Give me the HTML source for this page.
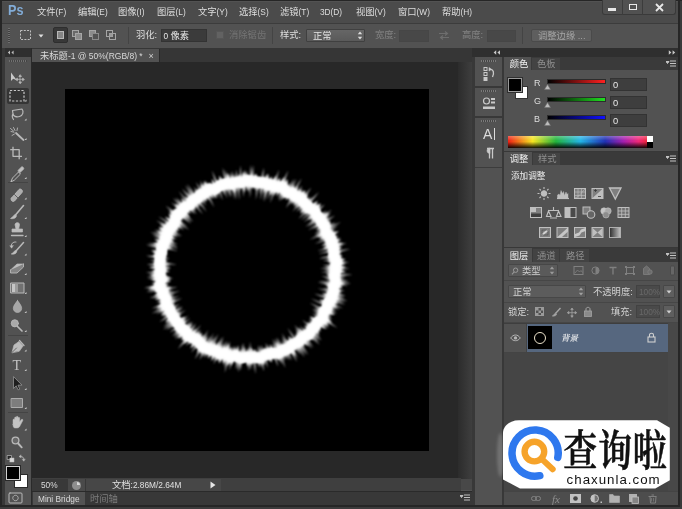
<!DOCTYPE html>
<html lang="zh-CN">
<head>
<meta charset="utf-8">
<title>Photoshop</title>
<style>
html,body{margin:0;padding:0}
body{width:682px;height:509px;position:relative;overflow:hidden;background:#262626;
 font-family:"Liberation Sans","Noto Sans CJK SC",sans-serif;font-size:9.3px;color:#dedede;line-height:1}
.a{position:absolute}
.t{position:absolute;white-space:nowrap;line-height:12px;height:12px;filter:blur(0.3px)}
.dim{color:#7e7e7e}
.l{font-size:8.3px}
.inp{position:absolute;background:#3b3b3b;border:1px solid #333;box-sizing:border-box}
</style>
</head>
<body>
<svg width="0" height="0" style="position:absolute"><defs><filter id="soft" x="-5%" y="-5%" width="110%" height="110%"><feGaussianBlur stdDeviation="0.35"/></filter></defs></svg>
<!-- window background -->
<div class="a" style="left:1.5px;top:1px;width:676.5px;height:504px;background:#525252"></div>

<div class="a" style="left:679.8px;top:1px;width:2.2px;height:508px;background:#3a3a3a"></div>
<div class="a" style="left:0;top:506.5px;width:682px;height:2.5px;background:#3c3c3c"></div>
<!-- menu bar -->
<div class="a" id="menubar" style="left:1.5px;top:1.5px;width:676.5px;height:21.5px;background:#4b4b4b"></div>
<div class="t" style="left:8.4px;top:2.3px;font-size:15.5px;font-weight:bold;color:#82acd7;line-height:16px;height:16px;transform:scaleX(0.815);transform-origin:0 0">Ps</div>
<div class="t" style="left:37px;top:6px">文件<span class="l">(F)</span></div>
<div class="t" style="left:78px;top:6px">编辑<span class="l">(E)</span></div>
<div class="t" style="left:118px;top:6px">图像<span class="l">(I)</span></div>
<div class="t" style="left:157px;top:6px">图层<span class="l">(L)</span></div>
<div class="t" style="left:198px;top:6px">文字<span class="l">(Y)</span></div>
<div class="t" style="left:239px;top:6px">选择<span class="l">(S)</span></div>
<div class="t" style="left:280px;top:6px">滤镜<span class="l">(T)</span></div>
<div class="t" style="left:320px;top:6px"><span class="l">3D</span><span class="l">(D)</span></div>
<div class="t" style="left:356px;top:6px">视图<span class="l">(V)</span></div>
<div class="t" style="left:398px;top:6px">窗口<span class="l">(W)</span></div>
<div class="t" style="left:442px;top:6px">帮助<span class="l">(H)</span></div>
<!-- window controls -->
<div class="a" style="left:602px;top:0;width:74px;height:15px;background:#515151;border:1px solid #3a3a3a;border-top:none;box-sizing:border-box;border-radius:0 0 3px 3px"></div>
<div class="a" style="left:622px;top:0;width:1px;height:15px;background:#3c3c3c"></div>
<div class="a" style="left:642px;top:0;width:1px;height:15px;background:#3c3c3c"></div>
<div class="a" style="left:608px;top:8px;width:8px;height:3px;background:#e8e8e8"></div>
<div class="a" style="left:629px;top:4px;width:8px;height:6px;border:1.5px solid #e8e8e8;box-sizing:border-box"></div>
<svg class="a" style="left:655px;top:3px" width="9" height="9" viewBox="0 0 9 9"><path d="M1 1L8 8M8 1L1 8" stroke="#e8e8e8" stroke-width="1.8" fill="none"/></svg>

<!-- options bar -->
<div class="a" style="left:2px;top:22.5px;width:676px;height:1.5px;background:#3c3c3c"></div>
<div class="a" style="left:2px;top:24px;width:676px;height:24px;background:#525252"></div>
<!--OPTIONS-->
<!-- options bar content -->
<div class="a" style="left:8px;top:28px;width:2px;height:15px;background:repeating-linear-gradient(to bottom,#6e6e6e 0 1px,#3f3f3f 1px 2px)"></div>
<svg class="a" style="left:19px;top:29px" width="30" height="12" viewBox="0 0 30 12"><rect x="1.5" y="1.5" width="10" height="9" fill="none" stroke="#c0c0c0" stroke-width="1" stroke-dasharray="2 1.3"/><path d="M19.5 5.5h5l-2.5 3z" fill="#e0e0e0"/></svg>
<div class="a" style="left:52.500px;top:27px;width:15.500px;height:15.500px;background:#383838;border:1px solid #2e2e2e;box-sizing:border-box;border-radius:2px"></div>
<div class="a" style="left:56.500px;top:31px;width:7.500px;height:7.500px;background:#858585;border:1px solid #b8b8b8;box-sizing:border-box"></div>
<svg class="a" style="left:71px;top:29px" width="48" height="12" viewBox="0 0 48 12">
 <g fill="#6a6a6a" stroke="#a6a6a6" stroke-width="1" filter="url(#soft)"><rect x="1.5" y="1.5" width="6" height="6"/><rect x="4.5" y="4.5" width="6" height="6" fill="#8c8c8c"/>
 <rect x="18.5" y="1.5" width="6" height="6" fill="#8c8c8c"/><rect x="21.5" y="4.5" width="6" height="6" fill="#525252" stroke="#8a8a8a"/>
 <rect x="35.5" y="1.5" width="6" height="6" fill="#525252"/><rect x="38.5" y="4.5" width="6" height="6" fill="none"/><rect x="38.5" y="4.5" width="3" height="3" fill="#9a9a9a" stroke="none"/></g></svg>
<div class="a" style="left:127.5px;top:27px;width:1px;height:17px;background:#444"></div>
<div class="t" style="left:136px;top:29px">羽化:</div>
<div class="inp" style="left:160.5px;top:29px;width:46px;height:13px"></div>
<div class="t" style="left:163.5px;top:29.5px;color:#e6e6e6"><span class="l">0 </span>像素</div>
<div class="a" style="left:215.5px;top:31px;width:8px;height:8px;background:#626262;border:1px solid #565656;box-sizing:border-box"></div>
<div class="t dim" style="left:229px;top:29px;color:#747474">消除锯齿</div>
<div class="a" style="left:272px;top:27px;width:1px;height:17px;background:#444"></div>
<div class="t" style="left:280px;top:29px">样式:</div>
<div class="a" style="left:306px;top:28.5px;width:58.5px;height:13.5px;background:linear-gradient(#666,#5a5a5a);border:1px solid #404040;box-sizing:border-box;border-radius:1px"></div>
<div class="t" style="left:313px;top:29.5px;color:#e6e6e6">正常</div>
<svg class="a" style="left:356.5px;top:31px" width="6" height="9" viewBox="0 0 6 9"><path d="M3 0.5L5.2 3.3H0.8zM3 8.5L5.2 5.7H0.8z" fill="#dcdcdc"/></svg>
<div class="t dim" style="left:375px;top:29px;color:#848484">宽度:</div>
<div class="a" style="left:399px;top:29.5px;width:29.5px;height:12.5px;background:#484848;border:1px solid #464646;box-sizing:border-box"></div>
<svg class="a" style="left:438px;top:30px" width="12" height="11" viewBox="0 0 12 11"><path d="M1 3.5h8M7 1.5l2.5 2L7 5.5M11 7.5H3M5 5.5L2.5 7.5L5 9.5" stroke="#6e6e6e" stroke-width="1.1" fill="none"/></svg>
<div class="t dim" style="left:462px;top:29px;color:#848484">高度:</div>
<div class="a" style="left:486.5px;top:29.5px;width:29px;height:12.5px;background:#484848;border:1px solid #464646;box-sizing:border-box"></div>
<div class="a" style="left:522px;top:27px;width:1px;height:17px;background:#444"></div>
<div class="a" style="left:530.5px;top:29px;width:61.5px;height:13px;background:#5e5e5e;border:1px solid #4a4a4a;box-sizing:border-box;border-radius:2px"></div>
<div class="t" style="left:538px;top:29.5px;color:#a4a4a4">调整边缘 ...</div>


<!-- tab bar row -->
<div class="a" style="left:2px;top:48px;width:676px;height:14px;background:#363636"></div>

<!-- canvas surround -->
<div class="a" style="left:32px;top:62px;width:440px;height:417px;background:#282828"></div>
<!-- canvas -->
<div class="a" style="left:64.5px;top:88.8px;width:364.5px;height:362.7px;background:#000"></div>
<svg style="position:absolute;left:0;top:0" width="682" height="509" viewBox="0 0 682 509"><defs><filter id="rb" x="-10%" y="-10%" width="120%" height="120%"><feGaussianBlur stdDeviation="1.0"/></filter><filter id="rc" x="-10%" y="-10%" width="120%" height="120%"><feGaussianBlur stdDeviation="1.2"/></filter></defs><path d="M339.7 269.6 343.8 270.6 340.1 271.5 340.4 272.5 339.4 273.4 352.7 275.1 339.4 275.4 346.4 276.8 339.1 277.3 344.9 278.8 339.7 279.3 349.2 281.3 340.0 281.3 351.2 283.8 340.2 283.3 348.1 285.5 339.0 285.0 343.1 286.8 338.4 286.9 339.0 288.0 338.1 288.8 344.9 291.3 337.9 290.8 341.4 292.6 338.1 292.8 345.7 295.9 337.9 294.8 344.8 297.8 337.1 296.6 347.6 300.9 336.2 298.4 345.7 302.6 335.3 300.1 345.4 304.8 334.2 301.8 338.0 304.3 333.2 303.4 343.1 308.5 332.2 305.1 339.6 309.4 331.6 307.0 336.1 310.1 330.8 308.7 337.0 312.8 330.3 310.6 336.3 314.8 329.1 312.1 331.5 314.5 328.4 314.0 331.8 317.0 327.3 315.6 332.4 319.7 327.4 317.9 330.8 321.2 326.7 319.7 337.6 328.0 326.1 321.7 328.8 324.7 323.8 322.5 329.2 327.5 322.4 323.9 327.9 329.2 321.0 325.2 320.8 326.3 320.0 326.9 321.3 329.2 319.0 328.6 321.1 331.7 317.5 329.9 319.1 332.5 316.4 331.4 320.2 336.3 314.8 332.6 321.8 340.6 313.8 334.4 319.5 341.4 312.9 336.2 319.7 344.7 311.8 337.9 312.9 340.5 309.9 338.7 310.1 340.4 307.8 339.2 313.5 347.4 306.0 340.0 311.9 348.8 305.0 341.9 305.0 343.4 303.7 343.4 304.9 346.6 302.1 344.5 308.4 355.0 300.3 345.3 306.2 355.6 298.9 346.7 304.7 357.4 297.3 347.7 300.3 354.5 295.2 348.0 295.5 350.5 293.7 349.2 297.9 358.6 292.4 350.8 297.2 361.9 290.9 352.3 290.2 353.1 289.0 352.8 291.7 360.5 287.3 353.7 289.3 360.4 285.3 354.0 286.5 359.2 283.5 354.8 285.0 361.0 281.8 355.8 285.5 368.0 280.4 357.5 281.8 364.3 278.2 357.2 278.1 360.1 276.3 357.5 278.1 366.7 274.1 357.1 273.6 358.8 272.5 358.3 271.7 359.0 270.5 358.2 270.4 362.1 268.7 358.9 268.1 360.8 266.7 358.8 267.5 367.9 264.8 359.4 264.7 364.1 263.2 361.2 263.8 371.5 261.3 362.0 261.1 367.7 259.4 362.4 259.0 367.3 257.4 362.2 256.5 362.8 255.4 361.7 255.4 374.0 253.5 362.1 252.7 364.3 251.6 361.6 250.9 369.9 249.6 362.3 248.8 370.9 247.7 361.4 246.7 362.2 245.8 361.9 244.8 362.7 243.8 362.4 242.8 362.9 241.9 362.3 240.3 370.7 239.8 363.2 238.0 372.3 238.0 362.1 236.1 369.8 236.2 360.9 235.2 361.0 234.3 360.3 233.0 362.6 232.3 360.4 229.6 370.1 230.2 361.1 228.5 364.6 228.4 360.5 224.6 373.0 226.5 359.8 223.8 366.9 224.9 358.5 222.7 363.0 222.9 358.3 221.8 358.9 220.9 358.5 218.6 362.6 219.1 357.7 217.5 359.5 217.3 357.0 213.6 364.3 215.7 355.7 213.2 359.4 213.9 355.0 212.2 356.5 212.0 354.4 210.4 355.8 210.1 354.0 208.5 355.1 208.2 353.6 205.1 357.8 206.2 353.2 203.1 357.1 204.4 352.5 199.4 359.7 202.7 351.5 200.7 353.0 200.8 350.8 194.6 359.4 199.6 349.0 197.8 350.0 197.9 348.0 196.2 348.9 197.0 346.0 191.2 352.7 195.7 344.4 193.1 346.5 193.9 343.7 192.9 343.4 192.4 342.4 190.4 343.5 190.4 341.9 186.0 345.8 188.9 340.6 187.1 341.3 186.6 340.4 177.8 348.9 185.1 339.1 182.7 340.3 184.0 337.4 181.9 338.3 182.8 335.9 178.4 338.9 181.9 334.0 174.9 339.4 180.3 332.9 173.9 337.5 178.9 331.6 172.2 336.2 177.0 330.7 174.3 331.7 176.2 328.7 169.9 332.6 175.4 326.9 174.1 326.7 173.9 325.6 166.2 330.1 173.0 323.9 163.1 329.7 171.7 322.4 163.3 326.9 170.8 320.7 165.1 323.2 169.7 319.1 168.0 319.0 168.7 317.4 159.5 321.7 167.7 315.8 163.3 317.2 166.5 314.3 160.6 316.3 166.3 312.1 160.7 313.9 165.6 310.4 155.9 314.0 163.6 309.2 151.7 313.6 162.4 307.6 155.3 309.6 161.6 305.8 151.6 308.8 161.8 303.6 161.5 302.7 161.8 301.5 156.3 302.5 161.6 299.6 160.2 299.1 160.0 298.1 153.5 299.1 158.7 296.5 149.4 298.2 159.1 294.3 156.5 294.0 158.4 292.5 155.0 292.4 157.3 290.8 146.1 292.3 155.6 289.2 146.5 290.0 154.7 287.4 144.0 288.3 154.8 285.3 154.4 284.4 156.5 283.1 155.1 282.3 156.7 281.1 152.6 280.6 157.0 279.1 147.1 279.1 156.2 277.3 146.8 277.0 155.4 275.4 148.5 274.8 155.9 273.4 145.9 272.8 155.9 271.5 154.0 270.6 156.0 269.6 155.2 268.6 155.9 267.7 154.6 266.7 155.3 265.7 146.7 264.3 155.3 263.8 154.7 262.8 155.7 261.9 150.4 260.4 155.4 259.9 154.4 258.8 155.4 257.9 146.0 255.7 155.5 256.0 153.8 254.7 156.2 254.1 153.4 252.6 156.9 252.3 150.6 250.0 157.7 250.5 155.7 249.0 157.7 248.5 145.9 244.6 157.0 246.3 148.0 242.9 157.8 244.5 155.9 242.9 158.9 242.8 157.1 241.2 160.6 241.3 157.4 239.2 160.4 239.2 152.5 235.3 160.9 237.3 150.1 232.1 161.8 235.6 153.1 231.0 162.7 233.9 154.8 229.4 162.8 231.8 158.5 228.8 163.3 229.9 159.3 226.9 164.1 228.1 162.8 226.3 165.3 226.5 156.2 220.6 166.6 225.0 164.8 222.9 168.8 224.0 158.1 216.6 169.4 222.2 169.2 220.9 170.6 220.6 169.5 218.8 171.0 218.7 169.7 216.6 172.0 217.0 168.6 213.4 172.4 214.9 168.1 210.5 173.5 213.3 165.5 205.8 174.8 211.8 173.7 209.7 176.3 210.5 175.3 208.4 177.6 209.1 171.3 202.3 179.1 207.8 176.0 203.7 179.7 205.7 173.0 198.0 181.0 204.3 175.6 197.5 182.9 203.5 183.3 202.5 184.8 202.6 180.8 196.9 187.0 202.1 178.5 191.2 187.9 200.4 187.0 197.7 188.4 197.9 182.1 188.6 189.8 196.5 187.0 191.4 191.3 195.4 185.1 185.3 193.5 195.0 186.7 183.8 195.4 194.4 195.0 192.1 196.5 192.5 194.1 187.1 198.2 191.5 197.3 188.3 199.7 190.3 195.9 181.9 201.7 189.9 200.3 185.4 203.4 188.9 200.0 180.6 204.4 186.8 203.7 183.2 206.2 186.0 204.5 180.2 208.0 185.2 207.8 182.5 209.9 184.7 210.0 182.5 212.1 184.8 212.7 183.7 214.0 184.5 214.6 183.4 215.6 183.2 212.0 170.5 217.1 181.8 217.6 180.2 219.1 181.5 219.7 180.4 221.0 181.1 221.1 178.1 222.7 180.0 223.4 178.9 224.5 179.2 222.6 167.5 226.5 179.3 225.5 170.1 228.5 179.4 228.3 173.5 230.6 179.9 230.2 172.1 232.4 178.9 232.1 171.1 234.2 178.2 234.6 173.8 236.1 178.2 236.1 169.7 238.0 177.7 238.7 174.4 240.0 177.7 240.0 165.3 241.9 178.0 242.7 173.3 243.8 176.8 244.6 169.6 245.7 176.1 246.7 170.7 247.7 175.6 248.7 174.9 249.7 176.3 251.0 164.8 251.6 176.6 253.2 165.0 253.5 177.4 254.7 174.4 255.5 177.2 256.7 174.7 257.3 178.1 258.6 175.7 259.2 178.5 260.5 176.4 261.2 178.2 263.8 167.8 263.2 178.1 264.6 175.9 265.0 179.2 267.0 173.9 266.9 179.3 268.3 177.5 268.6 180.4 270.0 178.7 270.6 180.4 271.9 179.4 272.5 180.6 273.9 179.3 274.5 180.9 279.1 169.4 276.2 182.0 278.4 178.5 278.0 182.7 279.5 181.3 280.0 182.7 281.4 181.7 282.3 182.1 288.2 170.5 284.1 183.1 287.0 178.8 285.6 184.6 287.7 182.2 287.0 186.0 289.7 182.7 288.3 187.8 294.0 178.7 290.2 188.3 296.4 178.8 292.5 188.0 294.1 187.3 294.1 189.3 301.7 178.3 295.9 190.0 296.6 190.7 297.2 191.6 302.2 185.6 298.8 192.7 303.0 188.2 300.5 193.7 303.5 191.1 302.5 194.2 305.5 191.8 304.3 195.0 311.4 187.5 305.0 197.2 307.4 195.9 306.4 198.7 309.3 196.7 307.7 200.1 311.8 196.9 309.3 201.1 319.0 192.1 310.5 202.7 311.7 202.8 312.0 203.9 313.0 204.3 313.2 205.5 316.8 203.3 315.2 206.2 319.5 203.6 317.3 207.0 320.1 205.8 318.4 208.6 324.8 204.4 319.4 210.3 321.3 210.0 320.2 212.1 321.4 212.4 321.2 213.8 326.9 210.8 322.9 215.0 332.0 209.7 324.4 216.3 331.2 212.9 325.2 218.1 329.5 216.5 325.5 220.2 335.0 215.5 326.5 221.9 330.5 220.6 328.5 223.0 331.0 222.6 329.2 224.8 335.8 222.4 329.4 226.9 341.1 222.0 329.1 229.2 338.0 226.0 329.6 231.1 335.3 229.5 331.7 232.2 335.2 231.7 333.1 233.7 335.5 233.8 333.9 235.5 335.2 236.0 335.0 237.1 336.0 237.8 335.4 239.1 341.3 238.1 336.3 240.8 341.8 240.1 336.4 242.8 338.1 243.3 337.3 244.6 346.6 243.1 338.0 246.4 339.7 247.0 337.9 248.4 339.9 249.0 337.9 250.4 350.3 248.9 338.6 252.3 340.1 253.0 337.7 254.4 342.1 254.6 338.8 256.1 343.0 256.6 339.0 258.1 342.3 258.6 340.2 259.9 342.7 260.6 340.9 261.8 349.2 262.1 340.9 263.7 342.1 264.7 340.1 265.7 346.8 266.5 339.8 267.7 349.7 268.5Z M330.9 269.6 324.1 270.4 331.5 271.4 320.2 271.9 330.9 273.1 325.3 273.7 330.1 274.8 328.5 275.5 329.7 276.5 321.3 276.6 331.0 278.4 324.3 278.5 331.7 280.2 326.3 280.4 330.7 281.9 318.8 280.9 329.9 283.5 317.5 282.2 329.6 285.2 327.0 285.6 328.9 286.9 326.1 287.1 329.3 288.7 322.8 288.1 328.9 290.5 317.4 288.3 328.4 292.1 327.0 292.7 327.7 293.7 321.7 292.8 327.8 295.6 321.1 294.3 327.4 297.3 314.1 293.5 325.9 298.7 324.3 299.0 324.7 300.1 323.7 300.6 324.2 301.8 320.3 301.0 322.6 303.0 310.7 298.4 323.2 305.1 322.2 305.6 322.6 306.8 320.7 306.8 321.2 308.0 309.6 302.8 320.3 309.5 314.8 307.4 319.3 311.0 313.1 308.3 319.3 313.0 312.0 309.4 319.5 315.1 314.2 312.8 318.9 316.9 312.3 313.5 316.8 317.6 315.3 317.6 315.0 318.5 311.4 316.9 313.5 319.5 312.6 320.0 312.5 321.0 308.7 319.0 312.2 322.9 309.1 321.5 310.7 324.0 307.3 322.1 309.8 325.5 302.3 319.8 308.6 326.8 306.4 325.9 307.7 328.3 306.5 328.4 306.9 330.0 303.0 327.2 305.6 331.3 299.4 325.8 303.7 331.8 302.0 331.2 302.1 332.6 294.2 324.7 300.6 333.5 295.1 328.1 299.3 334.8 297.0 333.1 298.2 336.2 294.9 333.2 296.9 337.3 295.3 336.6 295.2 338.0 287.3 327.8 293.7 338.8 292.0 337.8 292.1 339.6 288.5 335.4 290.7 340.6 289.5 340.2 289.2 341.5 288.1 341.3 287.7 342.4 281.7 333.0 286.6 343.9 281.8 336.5 285.2 345.2 281.8 340.2 283.3 345.2 281.2 342.7 281.6 345.6 277.0 337.3 280.2 346.9 275.5 337.6 278.5 347.5 274.3 338.9 277.3 349.2 272.5 338.6 275.5 349.3 272.6 343.6 273.5 349.0 272.4 348.4 271.7 349.3 270.5 348.2 269.8 348.8 267.7 344.2 268.3 349.9 265.6 342.6 266.6 350.2 265.0 347.1 264.9 350.3 263.3 346.9 263.3 351.3 261.2 344.7 261.7 352.2 259.7 345.6 260.1 353.3 258.0 345.1 258.3 353.4 257.1 351.2 256.5 353.1 255.2 348.6 254.7 352.4 253.5 348.9 252.9 352.4 251.8 347.9 251.2 352.7 250.0 341.6 249.4 352.9 248.5 346.6 247.7 352.7 246.8 351.3 246.0 353.1 245.1 351.8 244.2 353.4 243.9 342.7 242.4 353.3 242.3 343.2 240.6 353.7 239.8 352.8 238.9 352.9 238.3 351.2 237.4 351.3 236.9 348.2 235.7 351.0 235.0 349.8 233.8 351.7 233.6 348.2 231.9 352.5 231.9 348.1 230.2 352.1 230.3 347.4 228.6 351.2 230.1 341.1 227.2 349.6 228.3 342.0 225.4 349.6 227.1 340.5 223.6 349.4 225.2 341.2 221.7 349.7 223.0 342.9 220.1 348.9 223.7 336.2 218.8 347.3 221.9 336.8 217.1 346.8 216.6 345.8 215.5 346.3 216.1 342.7 213.8 345.7 218.4 333.6 212.0 345.4 215.8 335.6 210.4 344.8 213.5 336.7 208.7 344.3 213.9 332.7 206.9 343.9 210.4 335.7 205.6 342.4 205.9 340.3 204.0 341.8 208.0 333.7 203.2 339.8 208.5 330.0 201.8 338.7 201.7 337.2 200.8 337.1 202.0 333.9 199.3 336.2 200.5 333.1 197.8 335.3 201.1 329.6 196.2 334.6 196.2 333.3 194.6 333.7 201.1 324.8 192.5 333.5 194.5 330.0 191.5 332.0 196.2 325.6 190.5 330.5 196.3 323.2 189.5 329.0 189.7 327.6 188.2 327.8 193.4 321.6 186.6 326.9 191.5 321.3 185.6 325.5 185.6 324.4 183.8 324.7 190.3 318.1 183.3 322.9 186.6 319.1 182.1 321.6 188.7 315.4 181.3 320.0 183.6 317.2 180.0 318.8 180.1 317.6 178.9 317.4 181.6 314.6 178.1 315.8 185.7 309.9 177.5 314.2 178.8 312.3 175.8 313.2 183.2 307.8 174.9 311.6 182.8 306.2 174.9 309.6 175.7 308.2 173.9 308.2 179.6 304.3 173.2 306.6 173.3 305.6 172.4 305.0 174.8 303.0 170.8 303.9 182.3 297.9 169.9 302.3 174.9 299.3 170.5 300.2 179.3 295.9 170.4 298.4 174.8 295.8 169.8 296.7 174.4 294.3 168.6 295.3 180.3 290.7 167.4 293.8 174.4 290.9 167.2 292.1 168.1 290.9 167.6 290.2 177.7 286.8 165.9 288.8 172.3 286.5 165.1 287.2 167.6 285.8 164.2 285.5 168.2 283.9 163.9 283.8 165.0 282.7 164.7 281.9 170.8 280.1 165.9 279.9 173.5 278.2 165.7 278.2 169.4 277.0 165.3 276.5 168.2 275.4 164.3 274.8 166.3 273.9 164.1 273.1 166.0 272.2 164.5 271.3 166.5 270.5 164.6 269.6 165.9 268.7 164.6 267.9 164.9 267.0 164.1 266.1 164.8 265.3 164.1 264.3 177.1 264.4 164.0 262.6 166.0 261.9 164.3 260.8 165.2 260.1 164.3 259.1 169.5 258.9 164.6 257.3 167.6 256.9 165.5 255.7 166.6 255.0 166.4 254.1 166.6 253.2 165.7 252.2 166.7 251.5 166.2 250.5 167.8 250.0 166.1 248.7 178.1 250.9 166.4 246.9 174.1 248.2 167.5 245.4 178.8 248.0 168.7 243.9 176.7 245.7 169.0 242.2 177.9 244.5 169.7 240.6 173.3 241.0 169.9 238.8 175.2 240.0 170.4 237.1 177.4 239.2 171.2 235.5 172.8 235.3 171.2 233.6 180.3 237.0 171.9 232.0 182.3 236.3 173.7 230.9 178.3 232.4 175.0 229.6 178.8 230.8 176.1 228.3 177.6 228.2 176.9 226.7 184.0 230.1 177.6 225.1 184.6 228.6 178.2 223.4 189.6 230.1 179.2 222.0 187.4 226.7 180.0 220.4 181.4 220.4 180.1 218.3 181.7 218.4 181.8 217.4 191.2 223.8 182.9 216.0 191.7 222.3 184.6 215.1 193.5 221.8 185.7 213.8 186.9 213.7 186.5 212.2 188.3 212.7 187.5 210.6 188.8 210.7 189.1 209.8 194.4 214.0 191.1 209.3 196.7 214.2 192.7 208.5 195.6 210.5 193.5 206.8 195.1 207.4 194.6 205.4 203.2 214.6 195.7 204.0 198.8 206.6 197.3 203.2 201.1 206.9 198.9 202.4 206.7 212.0 200.7 202.0 201.6 201.8 201.5 200.0 206.2 205.7 202.9 199.0 205.8 202.1 204.4 198.0 206.5 199.9 205.9 197.1 207.2 197.7 207.7 196.8 214.4 207.4 209.0 195.6 210.1 195.9 210.1 193.9 213.5 198.9 211.9 193.6 214.8 197.7 213.8 193.6 215.6 195.5 215.5 192.9 218.7 198.6 217.2 192.6 218.8 194.2 218.8 191.8 222.8 200.5 220.1 190.3 221.2 190.8 221.8 189.8 224.5 195.5 223.4 189.2 227.1 198.6 225.0 188.4 227.1 192.6 226.8 188.2 230.0 197.7 228.4 187.5 231.6 197.6 230.5 188.5 231.8 191.0 232.1 188.0 235.1 199.8 233.9 188.1 236.7 199.8 235.6 187.5 237.2 192.6 237.2 186.5 239.6 200.0 239.0 186.7 240.3 191.7 240.8 186.9 241.7 188.4 242.5 186.8 243.9 197.4 244.2 186.5 245.1 186.2 245.9 185.3 246.8 187.6 247.7 185.3 248.5 192.8 249.5 185.2 249.9 198.2 251.2 185.4 252.0 187.7 252.9 186.6 253.6 189.0 254.6 187.0 255.2 190.7 256.4 186.5 255.8 200.0 258.2 186.8 258.9 188.0 259.8 187.4 259.6 194.5 261.7 186.8 260.2 200.0 263.4 187.4 263.7 190.3 265.1 187.7 263.1 200.9 266.6 189.2 264.3 202.0 268.3 189.4 269.0 190.1 270.1 189.2 268.0 199.7 271.9 189.5 270.8 195.8 273.5 190.1 270.0 203.3 275.2 190.6 275.6 192.2 276.8 191.4 277.3 192.6 278.7 191.3 278.9 193.1 280.5 191.7 278.0 199.6 282.2 192.2 278.7 201.8 283.0 194.5 281.0 200.6 284.3 195.9 284.3 197.8 285.8 196.7 286.2 197.8 287.8 196.6 287.7 198.7 289.9 196.4 288.3 201.0 291.2 197.7 285.7 208.3 292.0 199.9 289.8 204.8 293.9 200.0 292.0 204.4 295.5 200.9 293.2 205.5 297.4 201.2 293.9 207.4 298.3 202.9 292.6 211.7 299.3 204.5 299.3 205.8 300.5 205.8 296.4 212.0 301.6 207.1 299.3 211.1 303.0 208.1 299.9 212.8 304.3 209.3 301.9 213.1 305.3 210.8 298.4 218.9 306.5 212.0 306.2 213.5 308.3 212.7 301.3 220.3 310.5 213.0 307.0 217.3 311.8 214.3 303.5 222.5 312.7 215.8 309.8 219.3 313.4 217.5 311.1 220.4 314.6 218.8 305.2 226.9 315.3 220.4 307.5 227.1 316.7 221.6 316.1 223.1 317.5 223.3 308.0 230.5 318.3 224.8 312.7 229.3 319.5 226.1 319.3 227.2 320.7 227.5 317.5 230.3 321.3 229.1 314.6 233.7 321.8 230.9 314.1 235.8 321.4 233.0 309.5 239.7 322.3 234.5 318.4 237.2 322.8 236.1 319.9 238.3 324.4 237.4 321.7 239.4 325.8 238.7 314.8 243.8 326.5 240.3 324.7 241.9 326.5 242.1 324.5 243.8 327.2 243.8 325.8 245.1 327.5 245.5 322.6 247.8 328.7 247.0 317.3 251.0 328.7 248.8 328.4 249.8 329.4 250.4 318.4 253.8 329.0 252.3 328.2 253.4 329.4 254.0 327.6 255.2 329.3 255.8 318.6 258.4 330.0 257.4 326.0 258.9 330.7 259.1 322.7 260.9 331.8 260.8 327.1 262.1 332.1 262.5 329.9 263.6 331.6 264.3 322.3 265.7 331.1 266.1 323.7 267.2 331.3 267.8 319.9 268.8Z" fill="#fff" fill-rule="evenodd" filter="url(#rb)" opacity="0.85"/><path d="M339.9 269.6 346.1 271.7 339.6 273.5 340.7 275.4 339.1 277.3 340.6 279.4 339.8 281.2 344.6 283.9 339.5 285.1 342.4 287.7 337.4 288.7 341.5 291.6 337.7 292.7 338.2 294.9 336.7 296.5 339.5 299.4 335.5 300.2 337.7 303.1 333.8 303.7 337.2 307.2 331.1 306.7 333.0 309.8 330.8 310.8 334.4 314.9 328.5 314.0 327.7 315.8 327.4 317.9 332.3 323.3 325.7 321.4 328.5 325.7 321.9 323.5 325.8 328.9 319.6 326.6 319.8 329.3 317.9 330.2 319.0 333.8 314.7 332.5 315.0 335.5 312.8 336.1 312.8 338.9 310.0 338.8 309.3 341.0 306.0 340.1 308.3 346.1 303.3 342.9 303.2 346.0 300.8 345.9 300.2 348.6 296.9 347.1 296.3 349.9 293.6 349.0 295.2 356.0 290.8 352.0 289.9 354.6 287.5 354.1 286.2 356.0 283.7 355.2 282.6 357.7 280.4 357.5 279.3 360.5 276.1 357.1 274.8 359.4 272.3 357.6 271.5 362.4 268.6 358.5 266.9 360.1 264.9 359.9 263.8 365.1 261.4 362.5 259.5 363.1 257.4 362.2 255.6 363.3 253.5 361.8 251.7 364.6 249.6 362.5 247.7 366.4 245.8 361.3 243.8 362.6 241.8 362.9 239.8 363.3 238.0 361.8 235.9 363.0 234.4 359.8 231.5 365.5 230.2 361.5 227.2 366.0 226.6 359.4 223.4 364.0 223.1 357.8 219.3 363.5 218.9 358.1 215.9 361.0 215.7 355.5 211.5 360.9 211.9 354.6 208.1 358.6 208.2 353.6 205.9 353.8 204.7 351.8 201.0 354.5 200.8 350.8 197.3 352.9 198.3 347.5 195.6 348.1 195.6 344.5 190.5 348.4 192.4 342.4 189.2 343.5 189.0 340.6 183.4 344.1 185.0 339.2 181.4 340.2 183.4 335.3 178.0 337.9 180.2 333.0 177.0 333.2 177.3 330.3 174.9 329.8 175.2 327.1 172.2 326.9 172.4 324.3 170.9 323.0 170.4 321.0 165.6 321.7 168.6 317.5 166.9 316.3 166.8 314.1 161.4 314.7 165.6 310.3 160.0 310.9 162.4 307.6 156.9 307.8 161.7 303.6 158.8 302.7 161.8 299.5 155.6 299.5 159.3 296.3 154.2 295.7 158.3 292.6 154.7 291.4 155.7 289.2 149.0 288.4 155.4 285.2 151.9 283.8 157.0 281.1 151.0 279.8 155.5 277.3 150.9 275.7 155.2 273.5 151.5 271.6 156.2 269.6 149.2 267.5 155.2 265.7 152.8 263.6 155.0 261.8 154.5 259.8 155.6 258.0 152.5 255.5 156.2 254.1 151.9 251.3 157.4 250.4 155.9 248.1 157.4 246.4 152.9 243.1 158.9 242.8 154.3 239.3 161.0 239.4 159.1 236.6 161.6 235.5 157.3 231.6 163.2 232.0 158.5 227.6 164.5 228.3 159.8 223.7 166.9 225.2 165.2 221.9 169.4 222.2 165.0 217.1 171.2 218.8 168.6 214.6 172.3 214.8 170.3 210.8 174.0 211.2 174.4 208.9 177.9 209.4 174.9 204.1 179.9 206.0 179.9 203.2 182.5 203.0 181.4 199.0 187.0 202.2 184.9 196.8 188.8 198.4 189.1 195.7 191.8 196.0 192.5 193.6 195.3 194.2 195.1 190.4 197.9 191.1 198.7 188.7 201.4 189.4 200.5 183.7 204.5 186.9 203.9 181.4 207.8 184.7 209.1 182.9 212.3 185.3 211.9 179.1 215.7 183.7 216.6 180.3 218.9 181.1 219.4 175.7 222.7 180.1 224.4 178.7 226.4 178.9 227.2 173.2 230.5 179.6 231.8 175.8 234.3 178.8 236.0 176.7 238.0 177.7 239.7 174.1 241.9 178.2 243.6 171.6 245.7 175.8 247.7 175.0 249.7 176.2 251.7 174.3 253.5 177.2 255.8 173.5 257.4 177.7 259.5 176.5 261.2 178.0 263.4 176.8 265.0 178.7 268.1 173.6 268.8 179.8 271.6 176.4 272.5 180.8 276.2 175.2 276.1 182.2 279.7 177.8 280.2 182.3 284.3 177.0 284.2 182.8 287.7 179.7 287.0 186.1 289.5 185.5 290.0 188.8 294.4 184.7 294.1 189.3 298.0 186.5 297.1 191.7 300.7 189.8 300.9 193.0 305.3 190.3 304.3 195.0 307.8 193.8 306.2 198.9 308.4 199.3 309.2 201.3 312.0 201.2 311.8 204.1 317.8 201.0 315.5 205.9 321.1 203.5 318.6 208.4 319.9 209.8 319.9 212.4 322.6 212.8 322.9 215.0 329.1 213.0 324.9 218.3 327.9 218.7 326.9 221.6 330.1 222.0 329.0 224.9 331.2 226.0 329.2 229.2 332.6 229.7 331.6 232.3 338.9 231.2 333.9 235.5 337.9 236.1 335.8 238.9 339.3 239.8 336.8 242.7 343.3 242.9 337.8 246.5 342.1 247.5 337.9 250.4 341.8 251.7 338.1 254.3 341.7 255.7 339.4 258.0 345.5 259.3 341.4 261.7 345.6 263.4 339.8 265.7 345.1 267.6Z M330.9 269.6 327.7 271.3 330.5 273.1 326.5 274.6 329.7 276.5 328.3 278.1 330.9 280.1 330.4 281.8 329.7 283.5 325.1 284.4 329.4 287.0 328.3 288.5 329.6 290.6 325.7 291.4 327.8 293.8 323.3 294.2 326.8 297.1 324.2 298.0 324.5 300.0 319.4 299.7 323.3 303.3 322.0 304.6 322.6 306.8 319.0 306.9 319.9 309.3 317.9 310.1 319.4 313.0 316.9 313.5 318.4 316.6 315.1 316.5 315.1 318.6 309.6 316.6 313.0 321.4 311.4 322.3 311.1 324.3 307.1 323.1 308.2 326.4 304.5 325.2 306.8 330.0 304.0 329.5 303.5 331.5 298.1 328.0 300.5 333.4 296.5 331.2 297.8 335.6 295.6 335.6 295.6 338.5 293.4 338.4 292.3 339.8 288.5 337.0 289.2 341.4 286.2 339.6 286.4 343.7 284.5 343.8 283.3 345.3 281.0 344.5 279.9 346.3 276.4 342.0 277.1 348.6 275.0 348.1 273.4 348.6 270.3 344.4 269.8 348.9 267.7 347.5 266.5 349.9 264.5 348.6 263.2 350.7 261.3 349.9 260.1 353.4 258.0 351.5 256.5 353.7 254.5 350.1 253.0 353.1 250.9 347.1 249.4 352.9 247.7 348.8 246.0 353.1 244.5 347.1 242.4 353.2 241.0 349.4 239.0 352.6 238.1 345.3 235.6 351.2 234.8 346.0 231.9 352.2 231.4 346.2 228.7 350.7 228.6 344.1 225.5 348.9 224.7 345.7 221.7 349.6 221.5 344.8 218.8 347.4 219.4 341.2 215.5 346.2 215.3 342.3 212.1 345.2 212.6 340.3 208.7 344.1 207.9 342.0 205.4 342.8 207.2 336.5 202.7 340.5 204.4 334.8 200.4 337.7 201.9 332.7 198.1 335.0 199.1 331.0 194.5 333.9 196.7 328.7 191.2 332.3 191.9 329.0 189.4 329.1 192.3 323.8 187.2 326.4 186.5 324.7 183.9 324.6 185.5 321.0 182.3 321.4 185.7 316.7 180.1 318.7 179.7 316.9 177.8 316.0 180.5 312.2 176.3 312.8 176.3 310.8 174.2 310.0 175.9 307.1 173.0 306.7 174.9 303.9 170.8 303.8 175.9 299.8 170.0 300.4 171.9 297.8 169.8 296.7 170.2 294.8 167.6 293.8 170.9 291.1 167.4 290.2 171.4 287.5 164.5 287.3 168.5 284.7 163.9 283.8 170.9 280.9 165.9 279.9 171.0 277.7 164.8 276.6 166.0 274.7 164.7 273.1 169.6 271.2 165.3 269.6 170.9 268.0 164.5 266.1 170.1 264.7 164.2 262.6 167.6 261.2 164.8 259.1 165.5 257.5 164.9 255.6 167.4 254.3 166.4 252.3 167.4 250.8 166.4 248.7 171.3 248.3 167.9 245.5 169.8 244.3 169.3 242.3 174.2 242.3 170.1 238.9 174.3 238.7 171.2 235.5 177.0 236.3 172.6 232.3 176.6 232.4 174.5 229.4 179.2 230.1 176.8 226.7 181.0 227.3 178.8 223.8 182.0 223.9 179.4 220.0 182.8 220.3 181.8 217.4 185.5 218.1 184.4 215.0 190.0 217.7 186.3 212.0 190.5 213.6 188.9 209.5 191.6 209.8 192.6 208.4 195.4 209.0 194.5 205.3 198.5 207.5 197.1 202.9 199.9 203.8 200.4 201.6 203.2 202.7 202.6 198.5 206.5 201.5 206.0 197.3 209.5 200.2 208.7 195.0 212.5 198.7 211.7 193.1 216.2 198.8 215.9 193.8 217.8 194.1 218.9 192.1 220.6 191.8 221.8 189.9 223.8 190.5 225.1 188.8 227.2 189.7 228.6 188.3 230.6 189.3 232.3 188.7 234.7 192.7 235.5 186.9 237.3 187.5 239.0 186.8 240.9 188.4 242.5 186.5 244.5 192.5 245.9 184.8 247.7 191.1 249.5 185.4 251.1 189.0 252.9 186.2 254.6 187.1 256.4 187.2 257.7 190.3 259.9 187.1 261.4 188.8 263.4 187.1 263.9 193.4 266.6 189.2 267.6 192.1 270.1 189.5 270.2 195.0 273.3 190.9 273.4 195.8 277.0 190.9 276.7 196.3 280.5 191.5 280.8 195.3 283.2 194.1 282.8 198.8 286.1 196.2 285.9 200.1 289.5 197.2 289.7 200.2 292.2 199.5 292.1 202.7 295.4 200.9 294.3 205.5 298.9 202.2 296.5 208.0 300.7 205.5 300.9 208.0 303.6 207.6 300.4 213.5 305.5 210.6 304.0 214.4 308.5 212.5 309.7 213.8 311.5 214.5 307.7 219.9 313.1 217.7 311.4 221.2 315.9 220.1 314.2 223.4 317.3 223.4 316.2 226.1 319.1 226.4 316.2 230.0 321.7 228.9 320.8 231.4 321.2 233.1 316.5 237.2 323.5 235.8 319.0 239.6 325.6 238.8 323.4 241.5 327.1 241.9 321.5 245.6 328.0 245.4 323.3 248.5 329.3 248.6 326.1 251.2 329.8 252.2 328.1 254.3 329.1 255.8 327.6 257.8 330.5 259.1 327.7 261.2 331.4 262.6 329.8 264.4 330.8 266.1 326.7 267.9Z" fill="#fff" fill-rule="evenodd" filter="url(#rb)" opacity="0.95"/><path d="M339.5 269.6 339.5 272.0 338.8 274.4 338.4 276.7 339.1 279.2 339.7 281.7 339.1 284.1 337.8 286.3 337.2 288.6 337.5 291.2 337.4 293.6 336.5 295.9 335.6 298.1 334.8 300.5 333.6 302.6 331.9 304.5 330.8 306.6 330.5 309.1 329.6 311.3 328.0 313.2 326.8 315.3 326.6 317.9 326.2 320.6 324.3 322.3 321.9 323.5 320.2 325.2 319.1 327.4 317.6 329.3 315.8 330.9 314.3 332.8 313.3 335.2 311.7 337.0 309.3 338.1 307.0 339.1 305.2 340.6 303.6 342.4 301.8 344.1 299.9 345.6 297.8 346.7 295.5 347.6 293.4 348.7 291.6 350.4 289.8 352.2 287.6 353.2 285.2 353.7 283.0 354.8 281.0 356.2 278.7 357.1 276.1 357.1 273.6 357.1 271.3 357.7 269.0 358.3 266.6 358.7 264.4 359.6 262.2 361.1 259.9 362.0 257.4 361.7 254.9 361.2 252.5 361.3 250.1 361.6 247.7 361.3 245.3 361.2 242.9 361.9 240.4 362.3 238.1 361.3 235.8 359.9 233.4 359.9 230.8 360.6 228.4 360.4 226.3 358.7 224.1 357.5 221.7 357.5 219.1 357.5 217.0 356.4 215.0 354.9 212.7 354.1 210.3 353.7 207.9 353.0 205.7 352.1 203.4 351.2 201.2 350.2 199.4 348.5 197.8 346.5 196.1 344.7 194.2 343.2 192.3 341.8 190.1 340.8 187.7 339.9 185.6 338.6 184.2 336.5 182.9 334.4 181.1 332.8 179.0 331.4 177.4 329.6 176.2 327.5 174.8 325.5 173.2 323.7 171.9 321.7 170.6 319.7 169.1 317.8 167.8 315.7 167.1 313.4 166.3 311.1 164.7 309.2 162.9 307.3 162.2 305.0 162.4 302.3 162.0 299.9 160.6 297.9 159.4 295.7 159.1 293.3 158.3 291.1 156.5 289.0 155.3 286.7 156.0 284.1 157.3 281.5 157.3 279.1 156.2 276.8 155.7 274.4 156.2 272.0 156.4 269.6 156.0 267.2 155.7 264.8 155.8 262.4 156.0 260.0 156.1 257.5 156.7 255.2 157.4 252.9 157.8 250.5 157.7 248.0 158.2 245.6 159.5 243.5 160.7 241.3 161.4 239.0 161.9 236.7 162.7 234.4 163.5 232.1 164.1 229.7 165.2 227.6 167.0 225.8 168.8 224.1 170.2 222.1 171.1 219.9 172.0 217.6 172.9 215.2 173.9 213.0 175.5 211.2 177.6 209.8 179.3 208.0 180.5 205.9 182.2 204.1 184.8 203.3 187.1 202.3 188.4 200.2 189.5 197.7 191.4 196.3 193.9 195.6 195.9 194.3 197.5 192.3 199.4 190.8 201.7 189.9 203.8 188.8 205.6 186.9 207.7 185.7 210.3 185.5 212.9 185.5 215.0 184.5 217.0 183.0 219.2 181.9 221.5 181.0 223.7 180.1 226.1 179.6 228.6 179.9 231.1 180.1 233.4 179.4 235.7 178.4 238.1 178.3 240.5 178.5 242.9 178.0 245.3 176.9 247.7 176.4 250.1 176.8 252.5 177.5 254.9 178.0 257.3 178.4 259.7 178.7 262.1 178.8 264.5 179.1 266.8 179.8 269.0 180.7 271.4 181.2 273.8 181.6 276.0 182.4 278.4 183.0 280.9 183.0 283.5 183.2 285.4 184.8 287.0 187.2 289.0 188.6 291.5 188.9 294.0 189.5 295.8 191.2 297.5 192.9 299.9 193.7 302.3 194.5 304.0 196.2 305.4 198.3 307.1 200.0 309.0 201.5 310.5 203.4 312.1 205.2 314.3 206.4 316.7 207.4 318.4 209.2 319.3 211.6 320.6 213.6 322.4 215.3 323.9 217.3 324.8 219.5 326.1 221.6 327.7 223.4 328.8 225.5 329.0 228.2 329.3 230.7 330.9 232.6 332.9 234.3 334.2 236.4 334.8 238.8 335.4 241.1 336.2 243.4 337.0 245.7 337.4 248.1 337.7 250.5 337.6 252.9 337.8 255.3 338.6 257.6 339.8 259.9 340.4 262.3 339.9 264.8 339.4 267.2Z M331.5 269.6 331.5 271.8 330.8 274.0 330.5 276.1 331.1 278.4 331.8 280.7 331.2 282.8 329.9 284.8 329.4 287.0 329.7 289.3 329.6 291.6 328.8 293.6 328.0 295.7 327.3 297.8 326.1 299.7 324.5 301.4 323.5 303.4 323.3 305.6 322.5 307.7 321.0 309.4 319.9 311.3 319.8 313.8 319.5 316.2 317.7 317.7 315.4 318.8 313.8 320.3 312.9 322.4 311.5 324.1 309.8 325.6 308.5 327.3 307.6 329.5 306.2 331.2 304.0 332.1 301.8 333.0 300.1 334.4 298.7 336.1 297.1 337.7 295.4 339.0 293.4 340.0 291.3 340.8 289.4 341.8 287.8 343.4 286.1 345.0 284.1 346.0 281.9 346.4 279.9 347.4 278.1 348.8 276.0 349.6 273.7 349.5 271.3 349.4 269.2 349.9 267.1 350.5 265.0 350.9 262.9 351.7 260.9 353.2 258.8 354.0 256.5 353.8 254.3 353.2 252.1 353.3 249.9 353.6 247.7 353.3 245.5 353.2 243.3 353.9 241.0 354.3 238.9 353.4 236.9 352.0 234.7 352.0 232.3 352.8 230.1 352.6 228.2 351.0 226.2 349.8 223.9 349.9 221.6 349.9 219.6 348.9 217.8 347.4 215.8 346.7 213.5 346.4 211.4 345.8 209.3 344.9 207.2 344.2 205.2 343.3 203.5 341.7 202.1 339.8 200.6 338.1 198.9 336.7 197.1 335.5 195.1 334.5 192.9 333.8 191.0 332.6 189.7 330.7 188.6 328.7 186.9 327.3 185.0 326.1 183.5 324.4 182.4 322.5 181.2 320.7 179.7 319.0 178.4 317.2 177.3 315.3 175.9 313.6 174.7 311.7 174.1 309.6 173.4 307.4 171.9 305.7 170.2 304.1 169.6 301.9 169.9 299.5 169.6 297.3 168.2 295.4 167.1 293.5 166.8 291.3 166.1 289.2 164.4 287.3 163.2 285.3 163.9 282.9 165.2 280.5 165.2 278.3 164.2 276.2 163.7 274.0 164.2 271.8 164.4 269.6 164.0 267.4 163.6 265.2 163.8 263.0 164.0 260.8 164.1 258.6 164.6 256.4 165.3 254.3 165.6 252.1 165.5 249.9 166.0 247.7 167.2 245.7 168.3 243.8 168.9 241.7 169.4 239.5 170.1 237.5 170.8 235.4 171.3 233.2 172.3 231.2 174.0 229.6 175.7 228.1 177.0 226.3 177.8 224.2 178.6 222.1 179.3 219.9 180.2 217.8 181.8 216.2 183.7 215.0 185.3 213.4 186.3 211.4 187.9 209.8 190.3 209.1 192.5 208.2 193.6 206.3 194.5 203.9 196.3 202.6 198.6 202.1 200.5 200.9 201.9 199.0 203.6 197.6 205.7 196.9 207.6 195.8 209.2 194.1 211.1 192.9 213.5 192.8 215.9 192.9 217.9 191.9 219.7 190.5 221.7 189.5 223.7 188.7 225.8 187.8 228.0 187.4 230.3 187.7 232.6 187.9 234.7 187.3 236.7 186.4 238.9 186.2 241.2 186.5 243.3 186.0 245.5 184.9 247.7 184.4 249.9 184.8 252.1 185.5 254.3 186.0 256.5 186.3 258.6 186.6 260.8 186.7 263.0 187.0 265.1 187.7 267.2 188.5 269.3 188.9 271.5 189.3 273.6 190.0 275.7 190.5 278.1 190.5 280.4 190.6 282.2 192.1 283.6 194.4 285.3 195.7 287.7 195.9 290.0 196.4 291.6 198.0 293.2 199.6 295.3 200.3 297.6 201.0 299.2 202.5 300.4 204.5 301.9 206.1 303.6 207.5 305.0 209.2 306.4 210.9 308.5 211.9 310.8 212.8 312.3 214.4 313.1 216.6 314.3 218.5 315.9 220.0 317.3 221.8 318.1 223.9 319.2 225.8 320.8 227.4 321.8 229.4 321.8 231.8 322.1 234.1 323.6 235.8 325.5 237.4 326.8 239.2 327.3 241.4 327.8 243.6 328.6 245.6 329.2 247.8 329.7 249.9 329.8 252.1 329.8 254.4 329.9 256.6 330.7 258.7 331.9 260.8 332.4 262.9 331.9 265.2 331.4 267.4Z" fill="#fff" fill-rule="evenodd" filter="url(#rc)"/></svg>

<!-- tab row: tools header + doc tab -->
<div class="a" style="left:2px;top:48px;width:3px;height:457px;background:#383838"></div>
<div class="a" style="left:5px;top:48px;width:26px;height:9px;background:#2f2f2f"></div>
<svg class="a" style="left:7px;top:50px" width="8" height="5" viewBox="0 0 8 5"><path d="M3 0.6L0.8 2.5L3 4.4zM6.600 0.600L4.400 2.500L6.600 4.400z" fill="#bdbdbd"/></svg>
<div class="a" style="left:5px;top:57px;width:26px;height:448px;background:#525252"></div>
<div class="a" style="left:31px;top:48px;width:1px;height:457px;background:#2a2a2a"></div>
<div class="a" style="left:32px;top:49px;width:127px;height:13px;background:#525252"></div>
<div class="a" style="left:159px;top:49px;width:1px;height:13px;background:#2a2a2a"></div>
<div class="t" style="left:40px;top:50px;color:#d8d8d8">未标题<span class="l" style="font-size:8.5px">-1 @ 50%(RGB/8) *</span></div>
<div class="t" style="left:148.5px;top:49.5px;color:#d0d0d0;font-size:9px">×</div>
<div class="a" style="left:9px;top:60px;width:18px;height:2px;background:repeating-linear-gradient(to right,#707070 0 1px,#444 1px 2px)"></div>
<!-- tools -->
<div class="a" style="left:7px;top:88px;width:22px;height:16px;background:#353535;border-radius:2px"></div>
<svg class="a" style="left:5px;top:57px" width="26" height="448" viewBox="5 57 26 448" fill="none" stroke="#cacaca" stroke-width="1.2" stroke-linecap="round" stroke-linejoin="round" filter="url(#soft)" opacity="0.86">
 <!-- move -->
 <path d="M11 72.5v8.5l2.2-2.2 3.6 1.4z" fill="#dcdcdc" stroke="none"/><path d="M20 76v6.500M16.700 79.300h6.600M20 75l-1.100 1.500h2.200zM20 83.500l-1.100-1.500h2.200zM15.900 79.300l1.500-1.100v2.200zM24.100 79.300l-1.500-1.100v2.200z" stroke-width="0.800" fill="#d2d2d2"/>
 <!-- marquee -->
 <rect x="10" y="90.500" width="14" height="10.500" stroke-dasharray="2.2 1.6" stroke="#e0e0e0" stroke-linecap="butt"/>
 <!-- lasso -->
 <path d="M12.5 110.5l9.5-1.5c2 2.5 1 6.500-2.500 7.500-3.500 1-6-0.500-6.500-2.500zM13 113.500c-1 2-1 4 0.500 6"/>
 <!-- wand -->
 <path d="M16 133l7.500 7" stroke-width="1.8"/><path d="M13.500 127.500l1.500 3M11 131.500l3 0.700M17.500 128l-0.500 2.500M12 135.500l2.500-1.500M10.500 128.500l3 2.500" stroke-width="0.9"/>
 <!-- crop -->
 <path d="M13 146.800v9.500h9M10.200 149.700h9v9.500" stroke-width="1.300" stroke-linecap="butt"/>
 <!-- eyedropper -->
 <path d="M11 181.500l1.500-3.500 6-6 2 2-6 6z" stroke-width="1"/><path d="M18 170.500l3.500-3.500c1-0.800 3 1.200 2 2.200l-3.500 3.300z" fill="#d2d2d2" stroke-width="0.8"/>
 <!-- healing -->
 <path d="M11.500 198l7.500-8.500c1.500-1.500 4.500 1 3 3l-7.500 8.500c-2 1.500-4.500-1-3-3z" fill="#bdbdbd" stroke-width="0.9"/><path d="M14.500 194.500l4 4" stroke="#5a5a5a" stroke-width="0.9"/>
 <!-- brush -->
 <path d="M23.500 205.500l-8 9.500" stroke-width="1.600"/><path d="M15 214.500c-1.500 0.500-2 2.500-4.500 4 3 0.800 6-0.500 6-2.800z" fill="#d2d2d2" stroke-width="0.600"/>
 <!-- stamp -->
 <path d="M15 224.500c0-2.500 4.500-2.500 4.500 0l-0.800 4.500h3.800v3h-10.500v-3h3.800z" fill="#cfcfcf" stroke-width="0.700"/><path d="M11.500 235.500h11.500" stroke-width="1.300"/>
 <!-- history brush -->
 <path d="M23.500 242.500l-7.500 8.500" stroke-width="1.500"/><path d="M15.500 250.500c-1.500 0.500-2 2.200-4.300 3.500 2.800 0.800 5.600-0.500 5.600-2.500z" fill="#d2d2d2" stroke-width="0.600"/><path d="M11.500 247c-1-3 1.500-5.500 4.500-5" stroke-width="1"/><path d="M10 246l1.600 2.200 1.600-2.400z" fill="#d2d2d2" stroke-width="0.500"/>
 <!-- eraser -->
 <path d="M10.500 270l6.500-6h6.500l-6.500 6z" fill="#d0d0d0" stroke-width="0.700"/><path d="M10.500 270v3h6.500l6.500-6v-3" stroke-width="0.900" fill="#8e8e8e"/>
 <!-- gradient -->
 <rect x="11" y="283" width="13" height="10" stroke-width="1" fill="#777"/><path d="M12 284h3v8h-3z" fill="#d8d8d8" stroke="none"/><path d="M15 284h3v8h-3z" fill="#a8a8a8" stroke="none"/>
 <!-- blur drop -->
 <path d="M17.500 300.500c2.500 3.500 4.200 5.500 4.200 7.800 0 2.400-1.900 4.200-4.200 4.200s-4.200-1.800-4.200-4.200c0-2.300 1.700-4.300 4.200-7.800z" fill="#b4b4b4" stroke-width="0.600"/>
 <!-- dodge -->
 <circle cx="14.800" cy="323.300" r="3.600" fill="#b8b8b8" stroke-width="0.800"/><path d="M17.500 326.500l4.500 4.500" stroke-width="1.700"/>
 <!-- pen -->
 <path d="M12 352.500l2-7.500 5-3.500 4 4.500-3.500 5z" fill="#cfcfcf" stroke-width="0.700"/><path d="M12 352.500l4.500-4.500" stroke="#555" stroke-width="0.800"/><path d="M19.500 340.500l4.500 5" stroke-width="1.300"/>
 <!-- path select -->
 <path d="M13.500 377v11.500l2.700-2.700 1.900 4.100 1.700-0.800-1.900-4h3.700z" fill="#141414" stroke="#a8a8a8" stroke-width="0.700"/>
 <!-- rectangle shape -->
 <rect x="11.500" y="398.500" width="11" height="9" fill="#858585" stroke="#c4c4c4" stroke-width="0.900"/>
 <!-- hand -->
 <path d="M13 424.500v-4.500c0-1.200 1.600-1.200 1.600 0v-2c0-1.200 1.700-1.200 1.700 0v-0.800c0-1.200 1.700-1.200 1.700 0v1c0-1.200 1.700-1.200 1.700 0v3.500l1.500-2c1-1 2.200 0 1.500 1l-2.500 4.800c-0.500 1.200-1.500 2.500-3 2.500h-2.200c-1.500 0-2-1.500-2-3.500z" fill="#d6d6d6" stroke-width="0.500"/>
 <!-- zoom -->
 <circle cx="15.500" cy="440.500" r="3.400" stroke-width="1.300" fill="#6e6e6e"/><path d="M18.200 443.500l3.500 3.800" stroke-width="1.900"/>
 <!-- small default/swap -->
 <rect x="7.500" y="455.500" width="4" height="4" fill="#222" stroke-width="0.700"/><rect x="10" y="458" width="4" height="4" fill="#eee" stroke-width="0.500"/>
 <path d="M20 456.500c2.500-0.500 4 1 3.800 3.500" stroke-width="0.900"/><path d="M20.800 455l-1.800 1.600 2 1.200zM22.300 459.500l1.500 1.800 1.300-2z" fill="#d2d2d2" stroke-width="0.400"/>
 <!-- quickmask -->
 <rect x="9" y="493" width="13" height="10" stroke-width="1" rx="1"/><circle cx="15.500" cy="498" r="2.700" stroke-width="0.900" stroke-dasharray="1.200 0.800"/>
</svg>
<div class="t" style="left:12.5px;top:357.5px;font-family:'Liberation Serif',serif;font-size:14px;line-height:16px;height:16px;color:#c4c4c4">T</div>
<!-- separators -->
<div class="a" style="left:8px;top:182px;width:20px;height:1px;background:#444"></div>
<div class="a" style="left:8px;top:335px;width:20px;height:1px;background:#444"></div>
<div class="a" style="left:8px;top:412px;width:20px;height:1px;background:#444"></div>
<!-- tiny corner triangles -->
<svg class="a" style="left:5px;top:57px" width="26" height="448" viewBox="5 57 26 448" fill="#cfcfcf">
 <path d="M24.5 101.500h2v-2zM24.5 120.500h2v-2zM24.5 140h2v-2zM24.5 159.500h2v-2zM24.5 179h2v-2zM24.5 199.500h2v-2zM24.5 219h2v-2zM24.5 237h2v-2zM24.5 255.500h2v-2zM24.5 275h2v-2zM24.5 294h2v-2zM24.5 313h2v-2zM24.5 332h2v-2zM24.5 351.500h2v-2zM24.5 371h2v-2zM24.5 390h2v-2zM24.5 409h2v-2zM24.5 430.500h2v-2z"/>
</svg>
<!-- fg/bg swatches -->
<div class="a" style="left:14px;top:474px;width:14px;height:14px;background:#fff;border:1px solid #2a2a2a;box-sizing:border-box"></div>
<div class="a" style="left:6px;top:466px;width:14px;height:14px;background:#000;border:1px solid #d0d0d0;box-sizing:border-box;box-shadow:0 0 0 1px #2a2a2a"></div>

<!-- vertical scrollbar track -->
<div class="a" style="left:458px;top:62px;width:14px;height:417px;background:linear-gradient(to right,#2c2c2c,#3e3e3e)"></div>
<!-- status bar -->
<div class="a" style="left:32px;top:478px;width:429px;height:13px;background:#3f3f3f"></div><div class="a" style="left:86px;top:479px;width:135px;height:12px;background:#474747"></div>
<div class="a" style="left:32px;top:479px;width:36px;height:12px;background:#393939"></div><div class="a" style="left:68px;top:479px;width:17px;height:12px;background:#4a4a4a"></div><div class="a" style="left:85px;top:479px;width:1px;height:12px;background:#383838"></div>
<div class="a" style="left:461px;top:479px;width:11px;height:11px;background:#484848"></div>
<div class="t" style="left:41px;top:478.500px;color:#dcdcdc"><span class="l">50%</span></div>
<div class="a" style="left:72px;top:480.5px;width:9px;height:9px;border-radius:5px;background:#8e8e8e"></div>
<div class="a" style="left:76.5px;top:481.5px;width:3.5px;height:3.5px;border-radius:0 4px 0 0;background:#d8d8d8"></div>
<div class="t" style="left:112px;top:478.500px;color:#e0e0e0">文档<span class="l">:2.86M/2.64M</span></div>
<svg class="a" style="left:210px;top:481px" width="6" height="8" viewBox="0 0 6 8"><path d="M0.500 0.500L5.500 4L0.500 7.500z" fill="#e6e6e6"/></svg>
<!-- bottom mini bridge bar -->
<div class="a" style="left:32px;top:491px;width:440px;height:1px;background:#2a2a2a"></div>
<div class="a" style="left:32px;top:492px;width:440px;height:13px;background:#383838"></div>
<div class="a" style="left:33px;top:492px;width:52px;height:13px;background:#535353"></div>
<div class="t" style="left:38px;top:492.500px;color:#dadada"><span class="l">Mini Bridge</span></div>
<div class="t" style="left:90px;top:492.500px;color:#7c7c7c">时间轴</div>
<svg class="a" style="left:460px;top:494px" width="10" height="7" viewBox="0 0 10 7"><path d="M0 1.500h3l-1.500 2zM4 1h6M4 3.500h6M4 6h6" stroke="#bdbdbd" stroke-width="1" fill="#bdbdbd"/></svg>

<!-- right dock -->
<div class="a" style="left:472px;top:48px;width:206px;height:457px;background:#383838"></div>
<div class="a" style="left:472px;top:48px;width:206px;height:9px;background:#2f2f2f"></div>
<svg class="a" style="left:493px;top:50px" width="8" height="5" viewBox="0 0 8 5"><path d="M3.200 0.300L0.600 2.500L3.200 4.700zM7 0.300L4.400 2.500L7 4.700z" fill="#c8c8c8"/></svg>
<svg class="a" style="left:668px;top:50px" width="8" height="5" viewBox="0 0 8 5"><path d="M0.800 0.300L3.400 2.500L0.800 4.700zM4.600 0.300L7.200 2.500L4.600 4.700z" fill="#c8c8c8"/></svg>
<!-- icon strip -->
<div class="a" style="left:475px;top:57px;width:27px;height:448px;background:#525252"></div>
<div class="a" style="left:475px;top:86px;width:27px;height:2px;background:#383838"></div>
<div class="a" style="left:475px;top:116px;width:27px;height:2px;background:#383838"></div>
<div class="a" style="left:475px;top:167px;width:27px;height:1px;background:#3c3c3c"></div>
<div class="a" style="left:481px;top:60px;width:15px;height:2px;background:repeating-linear-gradient(to right,#7a7a7a 0 1px,#444 1px 2px)"></div>
<div class="a" style="left:481px;top:90px;width:15px;height:2px;background:repeating-linear-gradient(to right,#7a7a7a 0 1px,#444 1px 2px)"></div>
<div class="a" style="left:481px;top:120px;width:15px;height:2px;background:repeating-linear-gradient(to right,#7a7a7a 0 1px,#444 1px 2px)"></div>
<svg class="a" style="left:475px;top:57px" width="27" height="110" viewBox="475 57 27 110" fill="none" stroke="#d6d6d6" stroke-width="1" filter="url(#soft)" opacity="0.9">
 <!-- history -->
 <rect x="484" y="67.500" width="3" height="3"/><rect x="484" y="72.500" width="3" height="3"/><rect x="484" y="77.500" width="3" height="3" fill="#d6d6d6"/>
 <path d="M490 69.500c3.500-0.500 4.500 3.500 2.500 7.500" stroke-width="1.300"/><path d="M489 67.500l2.500 1.800-2.500 1.800z" fill="#d6d6d6" stroke-width="0.500"/>
 <!-- properties -->
 <circle cx="486.500" cy="101" r="3" stroke-width="1.200"/><rect x="491" y="98" width="4" height="2" fill="#d6d6d6" stroke="none"/><rect x="491" y="101.500" width="4" height="2" fill="#d6d6d6" stroke="none"/><rect x="483" y="106.500" width="12" height="2.500" fill="#d6d6d6" stroke="none"/>
 <!-- para -->
 <path d="M487 148.500h7M492.500 148.500v10M489.500 148.500v10" stroke-width="1.300"/><path d="M490 148c-4 0-4 5.500 0 5.500z" fill="#d6d6d6" stroke-width="0.500"/>
</svg>
<div class="t" style="left:483px;top:127px;font-size:14px;line-height:14px;height:14px;color:#dcdcdc">A</div>
<div class="a" style="left:494px;top:128px;width:1px;height:12px;background:#dcdcdc"></div>

<!-- ===== Color panel ===== -->
<div class="a" style="left:504px;top:57px;width:174px;height:13px;background:#3a3a3a"></div>
<div class="a" style="left:504px;top:70px;width:174px;height:81px;background:#525252"></div>
<div class="a" style="left:504px;top:57px;width:27px;height:13px;background:#525252"></div>
<div class="a" style="left:532px;top:58px;width:28px;height:12px;background:#434343"></div>
<div class="t" style="left:509.7px;top:58px;color:#f0f0f0">颜色</div>
<div class="t" style="left:537px;top:58px;color:#8e8e8e">色板</div>
<svg class="a" style="left:666px;top:60px" width="10" height="7" viewBox="0 0 10 7"><path d="M0 1.500h3l-1.500 2zM4 1h6M4 3.500h6M4 6h6" stroke="#c4c4c4" stroke-width="1" fill="#c4c4c4"/></svg>
<div class="a" style="left:515px;top:86px;width:13px;height:13px;background:#fff;border:1px solid #333;box-sizing:border-box"></div>
<div class="a" style="left:508px;top:78px;width:14px;height:14px;background:#000;border:1.500px solid #9a9a9a;box-sizing:border-box;box-shadow:0 0 0 1px #303030"></div>
<div class="t" style="left:534px;top:77px;color:#dedede;font-size:9px">R</div>
<div class="t" style="left:534px;top:95px;color:#dedede;font-size:9px">G</div>
<div class="t" style="left:534px;top:113px;color:#dedede;font-size:9px">B</div>
<div class="a" style="left:547px;top:79px;width:59px;height:5px;background:linear-gradient(to right,#000,#ff2020);border:1px solid #2c2c2c;box-sizing:border-box"></div>
<div class="a" style="left:547px;top:97px;width:59px;height:5px;background:linear-gradient(to right,#000,#20e020);border:1px solid #2c2c2c;box-sizing:border-box"></div>
<div class="a" style="left:547px;top:115px;width:59px;height:5px;background:linear-gradient(to right,#000,#1010ff);border:1px solid #2c2c2c;box-sizing:border-box"></div>
<svg class="a" style="left:543px;top:84px" width="9" height="42" viewBox="0 0 9 42"><path d="M4.500 0.500L7.500 5.500H1.500zM4.500 18.500L7.500 23.500H1.500zM4.500 36.500L7.500 41.500H1.500z" fill="#bdbdbd" stroke="#707070" stroke-width="0.600"/></svg>
<div class="inp" style="left:610px;top:78px;width:37px;height:13px;background:#3e3e3e"></div>
<div class="inp" style="left:610px;top:96px;width:37px;height:13px;background:#3e3e3e"></div>
<div class="inp" style="left:610px;top:114px;width:37px;height:13px;background:#3e3e3e"></div>
<div class="t" style="left:613px;top:79px;color:#e8e8e8">0</div>
<div class="t" style="left:613px;top:97px;color:#e8e8e8">0</div>
<div class="t" style="left:613px;top:115px;color:#e8e8e8">0</div>
<div class="a" style="left:508px;top:136px;width:145px;height:11.5px;background:linear-gradient(to bottom,rgba(255,255,255,.3) 0,rgba(255,255,255,0) 40%,rgba(0,0,0,0) 48%,rgba(0,0,0,.92) 100%),linear-gradient(to right,#f01e14 0,#f6e620 17%,#22b43c 33%,#22b4e6 50%,#2030b4 67%,#a81eae 80%,#f02878 90%,#f01e14 100%)"></div>
<div class="a" style="left:646.5px;top:136px;width:6.5px;height:5.5px;background:#fff"></div>
<div class="a" style="left:646.5px;top:141.5px;width:6.5px;height:6px;background:#000"></div>

<!-- ===== Adjustments panel ===== -->
<div class="a" style="left:504px;top:152px;width:174px;height:13px;background:#3a3a3a"></div>
<div class="a" style="left:504px;top:165px;width:174px;height:82px;background:#525252"></div>
<div class="a" style="left:504px;top:152px;width:28px;height:13px;background:#525252"></div>
<div class="a" style="left:533px;top:153px;width:27px;height:12px;background:#434343"></div>
<div class="t" style="left:509.7px;top:153px;color:#f0f0f0">调整</div>
<div class="t" style="left:538px;top:153px;color:#8e8e8e">样式</div>
<svg class="a" style="left:666px;top:155px" width="10" height="7" viewBox="0 0 10 7"><path d="M0 1.500h3l-1.500 2zM4 1h6M4 3.500h6M4 6h6" stroke="#c4c4c4" stroke-width="1" fill="#c4c4c4"/></svg>
<div class="t" style="left:511px;top:169.5px;color:#ececec;font-size:8.6px">添加调整</div>
<svg class="a" style="left:505px;top:183px" width="173" height="60" viewBox="505 183 173 60" fill="none" stroke="#d8d8d8" stroke-width="1" filter="url(#soft)" opacity="0.82">
 <!-- row 1 -->
 <circle cx="544" cy="193.500" r="2.800" fill="#d8d8d8"/><path d="M544 187v2M544 198v2M537.500 193.500h2M548.500 193.500h2M539.500 189l1.400 1.400M547.100 196.600l1.400 1.400M548.500 189l-1.400 1.400M540.900 196.600l-1.400 1.400" stroke-width="1.100"/>
 <path d="M557 198.500h12" stroke-width="1.200"/><path d="M557.500 198v-3l1.500-1 1 1.500 1-5 1.500 3 1-2 1 4 1.500-3.500 1 2.500 1-1v4.500z" fill="#d8d8d8" stroke-width="0.400"/>
 <rect x="574.500" y="188.500" width="11" height="10" fill="#8a8a8a"/><path d="M575 198c4-1 6-5 10-9M578 189v9.500M581.500 189v9.500M575 192h10.500M575 195.500h10.500" stroke-width="0.600"/>
 <rect x="592" y="188.500" width="11" height="10" fill="#8a8a8a"/><path d="M592.500 198l10.500-9.500v9.500z" fill="#d8d8d8" stroke="none"/><path d="M594 190.500h3M595.500 189v3M598 196.500h3" stroke="#333" stroke-width="0.800"/>
 <path d="M609.500 188h11.500l-5.700 11z" fill="#8a8a8a" stroke-width="1.300"/>
 <!-- row 2 -->
 <rect x="530.500" y="207.500" width="11" height="10" fill="#8a8a8a"/><rect x="531" y="208" width="5" height="4" fill="#d8d8d8" stroke="none"/><rect x="531" y="213.500" width="10" height="3.500" fill="#3a3a3a" stroke="none"/>
 <path d="M553.500 207v3M548 210.500h11M548.500 211l-2 5.500h4.500zM558.500 211l-2 5.500h4.500zM550 218h7" stroke-width="1.100"/>
 <rect x="565" y="207.500" width="11" height="10" fill="#d8d8d8"/><rect x="570.500" y="208" width="5" height="9" fill="#4a4a4a" stroke="none"/>
 <rect x="583" y="207" width="7" height="7" fill="#8a8a8a"/><circle cx="591" cy="214.500" r="3.800" fill="#6a6a6a" stroke-width="1.100"/>
 <circle cx="604" cy="211" r="3.200" fill="#e0e0e0" stroke-width="0.600"/><circle cx="608" cy="211" r="3.200" fill="#bdbdbd" stroke-width="0.600"/><circle cx="606" cy="214.800" r="3.200" fill="#9a9a9a" stroke-width="0.600"/>
 <rect x="618" y="207.500" width="11" height="10" fill="#777"/><path d="M618 211h11M618 214.300h11M621.700 208v9.500M625.300 208v9.500" stroke-width="0.800"/>
 <!-- row 3 -->
 <rect x="539.500" y="227.500" width="11" height="10" fill="#8a8a8a"/><path d="M542 235l6-5" stroke-width="2" stroke="#eee"/><rect x="542" y="230" width="6" height="5" fill="none" stroke="#444" stroke-width="0.600"/>
 <rect x="557" y="227.500" width="11" height="10" fill="#8a8a8a"/><path d="M557.500 237l10.500-9.500v4l-6 5.500z" fill="#e0e0e0" stroke="none"/>
 <rect x="574.500" y="227.500" width="11" height="10" fill="#8a8a8a"/><path d="M575 234l4-1.500 2-3 4.500-1.500v3l-4 1.500-2 3-4.500 1.500z" fill="#e4e4e4" stroke="none"/>
 <rect x="592" y="227.500" width="11" height="10" fill="#8a8a8a"/><path d="M592.500 228l5 4.500-5 4.500zM602.500 228l-5 4.500 5 4.500z" fill="#d8d8d8" stroke="none"/>
</svg>
<div class="a" style="left:609px;top:227px;width:12px;height:11px;background:linear-gradient(to right,#333,#bdbdbd);border:1px solid #b0b0b0;box-sizing:border-box"></div>

<!-- ===== Layers panel ===== -->
<div class="a" style="left:504px;top:248px;width:174px;height:14px;background:#3a3a3a"></div>
<div class="a" style="left:504px;top:262px;width:174px;height:243px;background:#525252"></div>
<div class="a" style="left:504px;top:248px;width:28px;height:14px;background:#525252"></div>
<div class="a" style="left:533px;top:249px;width:26px;height:13px;background:#434343"></div><div class="a" style="left:560px;top:249px;width:29px;height:13px;background:#434343"></div>
<div class="t" style="left:509.7px;top:249.500px;color:#f0f0f0">图层</div>
<div class="t" style="left:537px;top:249.500px;color:#8e8e8e">通道</div>
<div class="t" style="left:566px;top:249.500px;color:#8e8e8e">路径</div>
<svg class="a" style="left:666px;top:252px" width="10" height="7" viewBox="0 0 10 7"><path d="M0 1.500h3l-1.500 2zM4 1h6M4 3.500h6M4 6h6" stroke="#c4c4c4" stroke-width="1" fill="#c4c4c4"/></svg>
<!-- filter row -->
<div class="a" style="left:508px;top:264px;width:50px;height:13px;background:#5a5a5a;border:1px solid #474747;box-sizing:border-box;border-radius:1px"></div>
<svg class="a" style="left:511px;top:267px" width="8" height="8" viewBox="0 0 8 8"><circle cx="4.600" cy="3.200" r="2.200" stroke="#9a9a9a" fill="none" stroke-width="1"/><path d="M3 5l-2 2.300" stroke="#9a9a9a" stroke-width="1.100"/></svg>
<div class="t" style="left:522px;top:264.500px;color:#cdcdcd">类型</div>
<svg class="a" style="left:549px;top:266px" width="6" height="9" viewBox="0 0 6 9"><path d="M3 0.500L5.200 3.300H0.800zM3 8.500L5.200 5.700H0.800z" fill="#9a9a9a"/></svg>
<svg class="a" style="left:570px;top:263px" width="108" height="16" viewBox="570 263 108 16" fill="none" stroke="#808080" stroke-width="1">
 <rect x="574" y="266.500" width="9" height="8"/><path d="M575 273l2.500-3 2 2 1.500-1.500 1.500 2" stroke-width="0.800"/>
 <circle cx="595.500" cy="270.500" r="3.600"/><path d="M595.500 267a3.600 3.600 0 0 1 0 7.200z" fill="#808080" stroke="none"/>
 <path d="M609.500 267.500h7M613 267.500v7" stroke-width="1.300"/>
 <rect x="626.500" y="267.500" width="7" height="6"/><path d="M625 266h2v2h-2zM633 266h2v2h-2zM625 273h2v2h-2zM633 273h2v2h-2z" fill="#808080" stroke="none"/>
 <path d="M643.500 274.500v-6l3-2.500 3 2.500v6z" fill="#6c6c6c" stroke-width="0.800"/><circle cx="650" cy="272" r="2.200" fill="#6c6c6c" stroke-width="0.800"/>
 <rect x="670.500" y="266" width="4" height="9" rx="1" fill="#666" stroke="#4a4a4a"/>
</svg>
<div class="a" style="left:504px;top:280px;width:174px;height:1px;background:#464646"></div>
<!-- blend row -->
<div class="a" style="left:508px;top:285px;width:78px;height:13px;background:#5c5c5c;border:1px solid #474747;box-sizing:border-box;border-radius:1px"></div>
<div class="t" style="left:513px;top:285.500px;color:#d4d4d4">正常</div>
<svg class="a" style="left:578px;top:287px" width="6" height="9" viewBox="0 0 6 9"><path d="M3 0.500L5.200 3.300H0.800zM3 8.500L5.200 5.700H0.800z" fill="#a0a0a0"/></svg>
<div class="t" style="left:593px;top:285.500px;color:#d2d2d2">不透明度:</div>
<div class="a" style="left:636px;top:285px;width:24px;height:13px;background:#4a4a4a;border:1px solid #424242;box-sizing:border-box"></div>
<div class="t" style="left:639px;top:285.500px;color:#686868"><span class="l">100%</span></div>
<div class="a" style="left:663px;top:285px;width:12px;height:13px;background:#5e5e5e;border:1px solid #474747;box-sizing:border-box;border-radius:1px"></div>
<svg class="a" style="left:666px;top:290px" width="6" height="4" viewBox="0 0 6 4"><path d="M0.500 0.500h5L3 3.500z" fill="#cfcfcf"/></svg>
<div class="a" style="left:504px;top:302px;width:174px;height:1px;background:#464646"></div>
<!-- lock row -->
<div class="t" style="left:508px;top:306px;color:#d2d2d2">锁定:</div>
<svg class="a" style="left:532px;top:304px" width="64" height="16" viewBox="532 304 64 16" fill="none" stroke="#a4a4a4" stroke-width="1" filter="url(#soft)">
 <rect x="535.500" y="307.500" width="8" height="8" stroke="#9a9a9a"/><path d="M536 308h2.500v2.500h-2.500zM541 308h2.500v2.500h-2.500zM538.500 310.500h2.500v2.500h-2.500zM536 313h2.500v2.500h-2.500zM541 313h2.500v2.500h-2.500z" fill="#9a9a9a" stroke="none"/>
 <path d="M560.500 308l-5 5.500" stroke-width="1.400"/><path d="M555.500 313c-1.200 0.500-1.500 2-3.300 3 2.200 0.600 4.400-0.400 4.400-2z" fill="#a4a4a4" stroke-width="0.500"/>
 <path d="M572 309v7.500M568.300 312.700h7.500M572 308l-1.200 1.600h2.400zM572 317.400l-1.200-1.600h2.400zM567.300 312.700l1.600-1.200v2.400zM576.700 312.700l-1.600-1.200v2.400z" stroke-width="0.800" fill="#a0a0a0" stroke="#a0a0a0"/>
 <rect x="584.500" y="311" width="7" height="5.500" fill="#8a8a8a" stroke-width="0.800"/><path d="M586 311v-2c0-2.200 4-2.200 4 0v2" stroke-width="1"/>
</svg>
<div class="t" style="left:611px;top:306px;color:#d2d2d2">填充:</div>
<div class="a" style="left:636px;top:305px;width:24px;height:13px;background:#4a4a4a;border:1px solid #424242;box-sizing:border-box"></div>
<div class="t" style="left:639px;top:305.500px;color:#686868"><span class="l">100%</span></div>
<div class="a" style="left:663px;top:305px;width:12px;height:13px;background:#5e5e5e;border:1px solid #474747;box-sizing:border-box;border-radius:1px"></div>
<svg class="a" style="left:666px;top:310px" width="6" height="4" viewBox="0 0 6 4"><path d="M0.500 0.500h5L3 3.500z" fill="#cfcfcf"/></svg>
<div class="a" style="left:504px;top:322px;width:174px;height:1px;background:#464646"></div>
<!-- layer row -->
<div class="a" style="left:504px;top:323px;width:164px;height:1px;background:#3e3e3e"></div>
<div class="a" style="left:527px;top:324px;width:141px;height:28px;background:#56677f"></div>
<div class="a" style="left:526px;top:324px;width:1px;height:28px;background:#444"></div>
<div class="a" style="left:504px;top:352px;width:164px;height:1px;background:#444"></div>
<svg class="a" style="left:510px;top:334px" width="11" height="8" viewBox="0 0 11 8"><path d="M0.700 4c2.500-4 7-4 9.600 0-2.600 3.600-7.100 3.600-9.600 0z" fill="none" stroke="#b4b4b4" stroke-width="1"/><circle cx="5.500" cy="3.900" r="1.700" fill="#b4b4b4"/></svg>
<div class="a" style="left:528px;top:326px;width:24px;height:23px;background:#000"></div>
<div class="a" style="left:534.2px;top:332px;width:11.6px;height:11.6px;border-radius:6px;border:1.500px solid #ece3cc;box-sizing:border-box"></div>
<div class="t" style="left:561px;top:332px;color:#f4f4f4;font-style:italic;font-size:8.500px">背景</div>
<svg class="a" style="left:647px;top:332px" width="9" height="11" viewBox="0 0 9 11"><rect x="1" y="5" width="7" height="5" fill="none" stroke="#d0d0d0" stroke-width="1.100"/><path d="M2.500 5v-2c0-2.400 4-2.400 4 0v2" fill="none" stroke="#d0d0d0" stroke-width="1.100"/></svg>
<div class="a" style="left:504px;top:353px;width:164px;height:138px;background:#454545"></div>
<!-- panel scrollbar track -->
<div class="a" style="left:668px;top:323px;width:10px;height:168px;background:#484848"></div>
<!-- bottom icons row -->
<div class="a" style="left:504px;top:492px;width:174px;height:13px;background:#4d4d4d"></div>
<div class="a" style="left:504px;top:491px;width:174px;height:1px;background:#444"></div>
<svg class="a" style="left:505px;top:492px" width="173" height="13" viewBox="505 492 173 13" fill="none" stroke="#8a8a8a" stroke-width="1" filter="url(#soft)" opacity="0.9">
 <rect x="531.500" y="496.500" width="5" height="4" rx="2"/><rect x="535.500" y="496.500" width="5" height="4" rx="2"/>
 <rect x="570.500" y="494.500" width="10" height="8" fill="#cfcfcf" stroke="#cfcfcf"/><circle cx="575.500" cy="498.500" r="2.300" fill="#444" stroke="none"/>
 <circle cx="594.700" cy="498.500" r="3.800" stroke="#cfcfcf" fill="#777"/><path d="M594.700 494.700a3.800 3.800 0 0 0 0 7.600z" fill="#cfcfcf" stroke="none"/><rect x="600.500" y="501.500" width="1.500" height="1.500" fill="#cfcfcf" stroke="none"/>
 <path d="M609.500 502.500v-8h3.500l1 1.500h5.500v6.500z" fill="#bdbdbd" stroke="#bdbdbd" stroke-width="0.600"/>
 <rect x="629.500" y="494.500" width="7" height="7" fill="#bdbdbd" stroke="#bdbdbd"/><rect x="632" y="497" width="6.500" height="6.500" fill="#8c8c8c" stroke="#d0d0d0" stroke-width="0.800"/>
 <path d="M648.500 496.500h8M650 496.500l0.500 6.500h5l0.500-6.500M651.500 495h2.500" stroke="#858585"/><path d="M651.500 498v3.500M653.500 498v3.500" stroke="#858585" stroke-width="0.700"/>
</svg>
<div class="t" style="left:552px;top:492.500px;color:#8e8e8e;font-style:italic;font-family:'Liberation Serif',serif;font-size:11px">fx</div>

<!-- watermark -->
<svg class="a" style="left:495px;top:415px" width="187" height="80" viewBox="495 415 187 80">
 <defs><filter id="wmn" x="-5%" y="-5%" width="110%" height="110%"><feGaussianBlur stdDeviation="0.500"/></filter><filter id="wmh" x="-100%" y="-20%" width="300%" height="140%"><feGaussianBlur stdDeviation="1.6"/></filter></defs>
 <ellipse cx="500.5" cy="455" rx="3.5" ry="22" fill="#a0a0a0" opacity="0.4" filter="url(#wmh)"/>
 <path d="M519 420.300H657L669.800 427.800V480.300L655.300 488.500H520L503 479.500V433C503 426 510 420.300 519 420.300Z" fill="#fff" filter="url(#wmn)"/>
 <path d="M539.8 475.7A23.1 23.1 0 1 1 557.8 457.4" fill="none" stroke="#2e78ee" stroke-width="7.500" stroke-linecap="round"/>
 <circle cx="534.400" cy="451.600" r="9.800" fill="none" stroke="#f6a32a" stroke-width="6.400"/>
 <path d="M541.400 458.600L552.700 469.300" stroke="#f6a32a" stroke-width="6" stroke-linecap="round"/>
</svg>
<div class="t" id="wmt" style="left:563.3px;top:427.1px;height:40px;line-height:40px;-webkit-text-stroke:0.45px #111;font-family:'Liberation Serif','Noto Serif CJK SC',serif;font-weight:600;font-size:34px;color:#111;letter-spacing:0.7px;transform:scaleY(1.265);transform-origin:0 0">查询啦</div>
<div class="t" id="wmu" style="left:566.6px;top:469.6px;height:20px;line-height:20px;font-size:13.3px;letter-spacing:1px;color:#111;font-family:'Liberation Sans',sans-serif">chaxunla.com</div>

</body>
</html>
